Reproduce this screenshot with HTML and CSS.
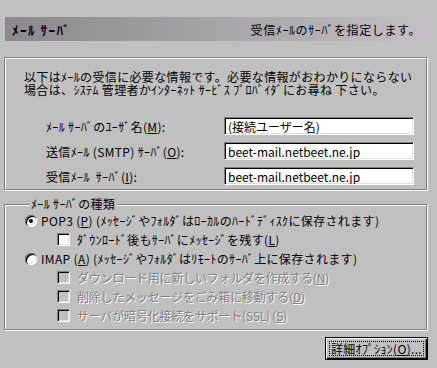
FILE: index.html
```html
<!DOCTYPE html>
<html lang="ja">
<head>
    <meta charset="UTF-8">
    <meta name="viewport" content="width=device-width, initial-scale=1.0">
    <title>メール サーバ</title>
    <link rel="stylesheet" href="styles.css">
</head>
<body>
    <div class="dialog">
        <div class="banner">
            <span class="banner-title">ﾒｰﾙ ｻｰﾊﾞ</span>
            <span class="banner-text">受信ﾒｰﾙのｻｰﾊﾞを指定します。</span>
        </div>

        <div class="info">
            <p class="intro">以下はﾒｰﾙの受信に必要な情報です。必要な情報がおわかりにならない<br>場合は、ｼｽﾃﾑ 管理者かｲﾝﾀｰﾈｯﾄ ｻｰﾋﾞｽ ﾌﾟﾛﾊﾞｲﾀﾞにお尋ね 下さい。</p>
            <div class="fields">
                <div class="field">
                    <label for="user">ﾒｰﾙ ｻｰﾊﾞのﾕｰｻﾞ名(<u>M</u>):</label>
                    <input id="user" class="text" type="text" value="(接続ユーザー名)">
                </div>
                <div class="field">
                    <label for="smtp">送信ﾒｰﾙ (SMTP) ｻｰﾊﾞ(<u>O</u>):</label>
                    <input id="smtp" class="text" type="text" value="beet-mail.netbeet.ne.jp">
                </div>
                <div class="field">
                    <label for="pop">受信ﾒｰﾙ&nbsp;&nbsp;ｻｰﾊﾞ(<u>I</u>):</label>
                    <input id="pop" class="text" type="text" value="beet-mail.netbeet.ne.jp">
                </div>
            </div>
        </div>

        <fieldset class="group">
            <legend>ﾒｰﾙ ｻｰﾊﾞの種類</legend>
            <div class="opt"><span class="radio checked"></span>POP3 (<u>P</u>) (ﾒｯｾｰｼﾞやﾌｫﾙﾀﾞはﾛｰｶﾙのﾊｰﾄﾞﾃﾞｨｽｸに保存されます)</div>
            <div class="opt sub"><span class="check"></span>ﾀﾞｳﾝﾛｰﾄﾞ後もｻｰﾊﾞにﾒｯｾｰｼﾞを残す(<u>L</u>)</div>
            <div class="opt"><span class="radio"></span>IMAP (<u>A</u>) (ﾒｯｾｰｼﾞやﾌｫﾙﾀﾞはﾘﾓｰﾄのｻｰﾊﾞ上に保存されます)</div>
            <div class="opt sub disabled"><span class="check"></span>ダウンロード用に新しいフォルダを作成する(<u>N</u>)</div>
            <div class="opt sub disabled"><span class="check"></span>削除したメッセージをごみ箱に移動する(<u>D</u>)</div>
            <div class="opt sub disabled"><span class="check"></span>サーバが暗号化接続をサポート(SSL) (<u>S</u>)</div>
        </fieldset>

        <div class="actions">
            <button class="btn" type="button"><span class="focus">詳細ｵﾌﾟｼｮﾝ(<u>O</u>)...</span></button>
        </div>
    </div>
</body>
</html>
```

FILE: styles.css
```css
body {
    margin: 0;
    background-color: #c0c0c0;
    font-family: "Noto Sans CJK JP", "Noto Sans", sans-serif;
    font-size: 12px;
    letter-spacing: 0.35px;
    color: #000;
}

.dialog {
    width: 423px;
    padding: 17px 0 0 4px;
}

/* Banner at the top */
.banner {
    display: flex;
    justify-content: space-between;
    align-items: center;
    height: 24px;
    margin-left: 1px;
    padding: 0 6px 0 7px;
    background: linear-gradient(to right, #8c888e, #a4a0a4 45%, #c6bec6);
}

.banner-title {
    font-size: 13px;
    font-weight: bold;
    letter-spacing: 1.5px;
}

.banner-text {
    letter-spacing: 0.6px;
}

/* Etched boxes */
.info,
.group {
    border: 1px solid #808080;
    box-shadow: inset 1px 1px #fff, 1px 1px #fff;
}

.info {
    height: 133px;
    margin-top: 16px;
    padding: 12px 0 0 19px;
    box-sizing: border-box;
}

.intro {
    margin: 0;
    line-height: 13px;
    white-space: nowrap;
}

.fields {
    display: flex;
    flex-direction: column;
    gap: 7px;
    margin-top: 21px;
    padding-left: 22px;
}

.field {
    display: flex;
    align-items: center;
}

.field label {
    width: 178px;
}

.text {
    width: 190px;
    height: 18px;
    box-sizing: border-box;
    margin: 0;
    padding: 0 3px;
    font-family: inherit;
    font-size: 12px;
    background: #fff;
    border: 1px solid;
    border-color: #808080 #fff #fff #808080;
    box-shadow: inset 1px 1px #000, inset -1px -1px #dfdfdf;
    outline: none;
}

/* Group box with radios */
.group {
    margin: 7px 0 0;
    padding: 0 0 3px 20px;
    min-width: 0;
    height: 133px;
    box-sizing: border-box;
}

.group legend {
    padding: 0 2px;
    margin-left: 4px;
    line-height: 14px;
    background-color: #c0c0c0;
}

.opt {
    display: flex;
    align-items: center;
    height: 19px;
    white-space: nowrap;
}

.opt.sub {
    padding-left: 32px;
}

.disabled {
    color: #808080;
    text-shadow: 1px 1px #fff;
    letter-spacing: -0.2px;
}

.radio {
    position: relative;
    width: 12px;
    height: 12px;
    margin-right: 4px;
    border-radius: 50%;
    background: #fff;
    box-shadow: inset 1px 1px #808080, inset 2px 2px #000, inset -1px -1px #fff, inset -2px -2px #dfdfdf;
}

.radio.checked::after {
    content: "";
    position: absolute;
    left: 4px;
    top: 4px;
    width: 4px;
    height: 4px;
    border-radius: 50%;
    background: #000;
}

.check {
    width: 13px;
    height: 13px;
    box-sizing: border-box;
    margin-right: 7px;
    background: #fff;
    border: 1px solid;
    border-color: #808080 #fff #fff #808080;
    box-shadow: inset 1px 1px #000, inset -1px -1px #dfdfdf;
}

.disabled .check {
    background: #c0c0c0;
}

/* Bottom button */
.actions {
    display: flex;
    justify-content: flex-end;
    margin-top: 7px;
}

.btn {
    width: 103px;
    height: 23px;
    margin-right: -1px;
    padding: 3px;
    font-family: inherit;
    font-size: 12px;
    letter-spacing: 0.3px;
    background: #c0c0c0;
    border: 1px solid #000;
    box-shadow: inset 1px 1px #fff, inset -1px -1px #000, inset -2px -2px #808080;
    box-sizing: border-box;
    display: flex;
}

.focus {
    flex: 1;
    display: flex;
    align-items: center;
    justify-content: center;
    border: 1px dotted #000;
    line-height: 13px;
}
```
